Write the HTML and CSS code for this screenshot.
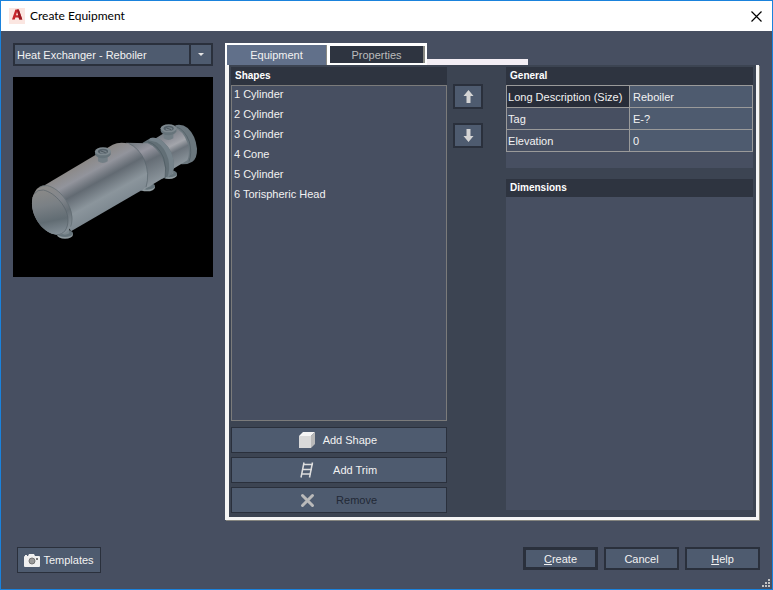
FILE: index.html
```html
<!DOCTYPE html>
<html lang="en">
<head>
<meta charset="utf-8">
<title>Create Equipment</title>
<link rel="stylesheet" href="styles.css">
</head>
<body>
<div class="window">
  <header class="titlebar">
    <svg class="app-icon" viewBox="0 0 16 16" aria-hidden="true">
      <rect width="16" height="16" fill="#fbe6e1"/>
      <path d="M3 11.5 6.4 1.5h3.4l3.5 10h-3L9.6 9.4H6.400L5.800 11.500zM7 7.200h2.200L8.100 3.800z" fill="#c8262d" fill-rule="evenodd"/>
      <path d="M8 1.500h1.800l3.500 10h-3L9.600 9.400 9.200 7.200z" fill="#971b22"/>
    </svg>
    <h1>Create Equipment</h1>
    <button class="close" type="button" aria-label="Close">
      <svg viewBox="0 0 11 11" aria-hidden="true"><path d="M.5.5l10 10M10.500.5l-10 10" stroke="#000" stroke-width="1.200"/></svg>
    </button>
  </header>

  <main class="content">
    <section class="chooser">
      <div class="combo">
        <select aria-label="Equipment type"><option>Heat Exchanger - Reboiler</option></select>
        <span class="combo-arrow"></span>
      </div>
      <svg class="preview" viewBox="0 0 200 200" role="img" aria-label="Reboiler preview">
        <defs>
          <linearGradient id="shell" gradientUnits="userSpaceOnUse" x1="180" y1="160" x2="258" y2="302">
            <stop offset="0" stop-color="#8b8886"/><stop offset=".24" stop-color="#92949c"/>
            <stop offset=".46" stop-color="#626a72"/><stop offset=".76" stop-color="#8b959c"/>
            <stop offset="1" stop-color="#7e8991"/>
          </linearGradient>
          <linearGradient id="cone" gradientUnits="userSpaceOnUse" x1="350" y1="95" x2="410" y2="215">
            <stop offset="0" stop-color="#777d83"/><stop offset=".25" stop-color="#9696a0"/>
            <stop offset=".5" stop-color="#656d75"/><stop offset="1" stop-color="#8b959c"/>
          </linearGradient>
          <linearGradient id="channel" gradientUnits="userSpaceOnUse" x1="435" y1="65" x2="485" y2="165">
            <stop offset="0" stop-color="#737b81"/><stop offset=".25" stop-color="#90929a"/>
            <stop offset=".42" stop-color="#a3a5ab"/><stop offset=".6" stop-color="#6b737b"/>
            <stop offset="1" stop-color="#8d979e"/>
          </linearGradient>
          <linearGradient id="head" gradientUnits="userSpaceOnUse" x1="70" y1="235" x2="100" y2="380">
            <stop offset="0" stop-color="#8b8a88"/><stop offset=".35" stop-color="#7a8085"/>
            <stop offset=".68" stop-color="#616c73"/><stop offset="1" stop-color="#87929a"/>
          </linearGradient>
          <linearGradient id="rim" gradientUnits="userSpaceOnUse" x1="60" y1="230" x2="150" y2="365">
            <stop offset="0" stop-color="#8d8b88"/><stop offset=".4" stop-color="#82868c"/>
            <stop offset=".65" stop-color="#666f76"/><stop offset="1" stop-color="#89949b"/>
          </linearGradient>
          <g id="nozzle">
            <path d="M-15 9v17q14 10 29 0V9z" fill="#727e85"/>
            <path d="M-24-5v9q3 12 24 13 20-1 23-12v-10z" fill="#66737a"/>
            <ellipse cy="-4" rx="24" ry="12" fill="#7e898f"/>
            <ellipse cy="-4" rx="15" ry="8" fill="#535f67"/>
            <ellipse cx="1" cy="-2" rx="10" ry="5" fill="#78838a"/>
            <path d="M-7-5 8 0" stroke="#49545b" stroke-width="3"/>
          </g>
          <g id="foot">
            <ellipse cy="4" rx="24" ry="12" fill="#8f9a9f"/>
            <ellipse rx="24" ry="11" fill="#66747b"/>
            <path d="M-14-16v16q14 8 27 0v-18z" fill="#7c888e"/>
          </g>
        </defs>
        <rect width="200" height="200" fill="#000"/>
        <g transform="translate(7 33) scale(.33333)">
          <use href="#foot" x="135" y="370"/>
          <use href="#foot" x="381" y="228"/>
          <use href="#foot" x="447" y="191"/>
          <path d="M466 46q20-5 37 8 24 22 28 62 1 28-14 39-14 9-33 8z" fill="#6b777e"/>
          <path d="M470 51q25 9 38 44 9 34-1 60" fill="none" stroke="#4e5b62" stroke-width="2"/>
          <path d="M405 86 460 52q29 8 43 48 8 31-1 51l-48 29z" fill="url(#channel)"/>
          <path d="M368 98 392 84q22-3 39 13 27 24 31 64 0 25-13 37l-22 8z" fill="#626f76"/>
          <path d="M392 84q22-3 39 13 27 24 31 64 0 25-13 37l-8 5q11-23 4-55-11-38-35-51l-24-6z" fill="#75828a"/>
          <path d="M318 98l65 2q29 12 45 47 12 30 7 54l-70 42z" fill="url(#cone)"/>
          <path d="M383 95q30 7 48 49 10 31 4 60" fill="none" stroke="#4b575f" stroke-width="2"/>
          <path d="M75 225 278 104q20-10 49-3 30 14 45 47 18 41 9 79l-11 11-217 126z" fill="url(#shell)"/>
          <path d="M326 100q31 15 47 49 17 43 5 83" fill="none" stroke="#58646b" stroke-width="2"/>
          <path d="M38 262C46 235 60 224 82 226C120 234 157 285 157 327C157 356 139 375 110 374C72 372 36 325 36 280Q36 270 38 262z" fill="url(#rim)"/>
          <path d="M38 262C44 244 56 238 70 240C107 248 144 294 144 330C144 356 132 374 110 374C72 372 36 325 36 280Q36 270 38 262z" fill="url(#head)"/>
          <path d="M42 252Q53 238 70 240C107 248 144 294 144 330C144 356 132 374 110 374" fill="none" stroke="#566168" stroke-width="2"/>
          <path d="M58 232Q68 225 82 227C120 235 156 285 156 327Q156 340 152 350" fill="none" stroke="#5e696f" stroke-width="2"/>
          <use href="#nozzle" x="249" y="128"/>
          <use href="#nozzle" x="446" y="59"/>
        </g>
      </svg>
    </section>

    <section class="tabbed">
      <div class="tab-row">
        <div class="tabs" role="tablist">
          <button class="tab selected" type="button" role="tab" aria-selected="true">Equipment</button>
          <button class="tab" type="button" role="tab" aria-selected="false">Properties</button>
        </div>
        <span class="tab-line"></span>
      </div>
      <div class="panel" role="tabpanel">
        <div class="shapes">
          <h2>Shapes</h2>
          <ul class="shape-list">
            <li>1 Cylinder</li>
            <li>2 Cylinder</li>
            <li>3 Cylinder</li>
            <li>4 Cone</li>
            <li>5 Cylinder</li>
            <li>6 Torispheric Head</li>
          </ul>
          <div class="shape-actions">
            <button class="btn thin" type="button">
              <svg viewBox="0 0 16 16" aria-hidden="true"><path d="M0 4 4 0h12l-4 4z" fill="#f5f5f5"/><path d="M0 4h12v12H0z" fill="#d9d9d9"/><path d="M12 4 16 0v12l-4 4z" fill="#b9b9b9"/></svg>
              <span>Add Shape</span>
            </button>
            <button class="btn thin" type="button">
              <svg viewBox="0 0 16 16" aria-hidden="true"><path d="M2 15.500 5 .5M10.500 15.500l3-15M4 2.500h10M3.500 7.500H13M2.500 12H12" fill="none" stroke="#dedede" stroke-width="1.500"/></svg>
              <span>Add Trim</span>
            </button>
            <button class="btn thin" type="button" disabled>
              <svg viewBox="0 0 16 16" aria-hidden="true"><path d="M3.500 3.500l10 10M13.500 3.500l-10 10" stroke="#bababa" stroke-width="3" stroke-linecap="round"/></svg>
              <span>Remove</span>
            </button>
          </div>
        </div>

        <div class="order">
          <button class="btn" type="button" aria-label="Move up">
            <svg viewBox="0 0 11 13" aria-hidden="true"><path d="M5.500 0 10.500 6H7.500v7h-4V6H.5z" fill="#d4d4d4"/></svg>
          </button>
          <button class="btn" type="button" aria-label="Move down">
            <svg viewBox="0 0 11 13" aria-hidden="true"><path d="M5.500 13 10.500 7H7.500V0h-4v7H.5z" fill="#d4d4d4"/></svg>
          </button>
        </div>

        <div class="details">
          <section class="group">
            <h2>General</h2>
            <table>
              <tr class="current"><th scope="row"><label for="desc">Long Description (Size)</label></th><td><input id="desc" value="Reboiler"></td></tr>
              <tr><th scope="row"><label for="tag">Tag</label></th><td><input id="tag" value="E-?"></td></tr>
              <tr><th scope="row"><label for="elev">Elevation</label></th><td><input id="elev" value="0"></td></tr>
            </table>
          </section>
          <section class="group grow">
            <h2>Dimensions</h2>
          </section>
        </div>
      </div>
    </section>
  </main>

  <footer class="footer">
    <button class="btn thin templates" type="button">
      <svg viewBox="0 0 16 13" aria-hidden="true"><path d="M1 2V1h2v1h1l1-2h5l1 2h4q1 0 1 1v9q0 1-1 1H1q-1 0-1-1V3q0-1 1-1z" fill="#f0f0f0"/><circle cx="8" cy="7" r="3" fill="#999" stroke="#737373"/><path d="M12 4h2v2h-2z" fill="#777"/></svg>
      <span>Templates</span>
    </button>
    <div class="dialog-actions">
      <button class="btn default" type="button"><span><u>C</u>reate</span></button>
      <button class="btn" type="button">Cancel</button>
      <button class="btn" type="button"><span><u>H</u>elp</span></button>
    </div>
    <svg class="grip" viewBox="0 0 8 8" aria-hidden="true"><path d="M6 0h2v2H6zM3 3h2v2H3zM6 3h2v2H6zM0 6h2v2H0zM3 6h2v2H3zM6 6h2v2H6z" fill="#c3c3c3"/></svg>
  </footer>
</div>
</body>
</html>
```
FILE: styles.css
```css
:root {
  --body: #474f61;
  --panel: #3c4452;
  --control: #4e5b6f;
  --edge: #2a303c;
  --heading: #2e3440;
  --text: #f2f2f2;
}

* { box-sizing: border-box; }

body {
  margin: 0;
  font: 11px/16px "Liberation Sans", Arial, sans-serif;
  color: var(--text);
}

button, input, select { font: inherit; color: inherit; }
h1, h2, ul { margin: 0; padding: 0; font-size: 12px; }

.window {
  min-height: 100vh;
  display: flex;
  flex-direction: column;
  border: 1px solid #1a82dc;
  background: var(--body);
}

.titlebar {
  height: 30px;
  display: flex;
  align-items: center;
  gap: 5px;
  padding: 0 10px 0 8px;
  background: #fff;
  color: #000;
}
.titlebar h1 {
  flex: 1;
  font: 12px/16px Lato, sans-serif;
}
.app-icon { width: 16px; height: 16px; }
.close {
  display: flex;
  padding: 0;
  border: 0;
  background: none;
}
.close svg { width: 11px; height: 11px; }

.content {
  flex: 1;
  display: grid;
  grid-template-columns: 200px 1fr;
  gap: 12px;
  padding: 12px 13px 0 12px;
}

.chooser {
  display: flex;
  flex-direction: column;
  gap: 11px;
}
.combo {
  display: grid;
  grid-template-columns: 1fr 22px;
  height: 23px;
  border: 2px solid var(--edge);
  background: var(--control);
}
.combo select {
  grid-area: 1 / 1 / 2 / 3;
  appearance: none;
  border: 0;
  padding: 0 24px 0 2px;
  background: none;
}
.combo-arrow {
  grid-area: 1 / 2;
  display: grid;
  place-items: center;
  border-left: 2px solid var(--edge);
  pointer-events: none;
}
.combo-arrow::before {
  content: "";
  border: 3px solid transparent;
  border-top-color: #e4e4e4;
  border-bottom: 0;
}
.preview { width: 100%; }

.tabbed {
  display: flex;
  flex-direction: column;
}
.tab-row {
  display: flex;
  align-items: flex-end;
}
.tabs {
  display: flex;
  padding: 2px 2px 0;
  background: #fff;
}
.tab {
  width: 95px;
  height: 17px;
  margin-top: 1px;
  padding: 0;
  border: 0;
  border-right: 2px solid #8a8a84;
  background: var(--heading);
  color: #bcbcbc;
}
.tab.selected {
  width: 100px;
  height: 20px;
  margin: 0 3px 0 0;
  border-right-width: 1px;
  background: #61708a;
  color: var(--text);
}
.tab-line {
  width: 101px;
  height: 6px;
  background: #f3eef4;
}

.panel {
  flex: 1;
  display: flex;
  padding: 2px 3px 4px 2px;
  border: solid #f5f5f5;
  border-width: 0 3px 3px 4px;
  box-shadow: 1px 1px #85857f;
  background: var(--panel);
}
.panel h2 {
  height: 18px;
  padding: 0 4px;
  background: var(--heading);
  color: #fff;
  font: bold 10px/18px "Liberation Sans", sans-serif;
}

.shapes {
  flex: 7;
  display: flex;
  flex-direction: column;
}
.shape-list {
  flex: 1;
  padding: 0 2px;
  border: 1px solid #7b7b7b;
  background: var(--body);
  list-style: none;
  font-size: 11px;
}
.shape-list li { margin-bottom: 4px; }
.shape-actions {
  display: grid;
  gap: 4px;
  padding-top: 6px;
}

.btn {
  display: flex;
  align-items: center;
  justify-content: center;
  padding: 0;
  border: 2px solid var(--edge);
  background: var(--control);
}
.btn.thin { height: 26px; border-width: 1px; }
.btn:disabled { color: #222936; }
.shape-actions .btn {
  justify-content: space-between;
  padding: 0 69px 0 67px;
}
.shape-actions svg { width: 16px; height: 16px; }

.order {
  display: flex;
  flex-direction: column;
  gap: 14px;
  padding: 17px 23px 0 6px;
}
.order .btn { width: 30px; height: 25px; }
.order svg { width: 11px; height: 13px; }

.details {
  flex: 8;
  display: flex;
  flex-direction: column;
  gap: 11px;
  padding-bottom: 3px;
}
.group {
  padding-bottom: 16px;
  background: var(--body);
}
.grow { flex: 1; }

table {
  width: 100%;
  border-collapse: collapse;
  table-layout: fixed;
}
th, td {
  height: 22px;
  padding: 0 2px;
  border: 1px solid #9a9a9a;
  font-weight: normal;
  text-align: left;
  white-space: nowrap;
}
th { padding: 0 1px; }
td { background: var(--control); }
.current th { background: #282d39; }
td input {
  display: block;
  width: 100%;
  height: 20px;
  padding: 0 1px;
  border: 0;
  background: none;
}

.footer {
  display: flex;
  align-items: flex-start;
  justify-content: space-between;
  height: 69px;
  padding: 27px 12px 0 16px;
  position: relative;
}
.templates { gap: 3px; width: 84px; }
.templates svg { width: 16px; height: 13px; }
.dialog-actions { display: flex; gap: 6px; }
.dialog-actions .btn { width: 75px; height: 23px; }
.dialog-actions .default { border-width: 3px; }
.grip {
  position: absolute;
  right: 2px;
  bottom: 2px;
  width: 8px;
  height: 8px;
}
```
